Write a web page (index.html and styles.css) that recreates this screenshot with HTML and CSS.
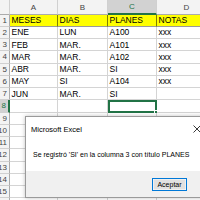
FILE: index.html
```html
<!DOCTYPE html>
<html>
<head>
<meta charset="utf-8">
<link rel="stylesheet" href="styles.css">
</head>
<body>
<div class="sheet">
  <div class="ch corner"></div>
  <div class="ch">A</div>
  <div class="ch">B</div>
  <div class="ch sel">C</div>
  <div class="ch">D</div>

  <div class="rh"><span>1</span></div>
  <div class="c y">MESES</div><div class="c y">DIAS</div><div class="c y">PLANES</div><div class="c y">NOTAS</div>

  <div class="rh"><span>2</span></div>
  <div class="c">ENE</div><div class="c">LUN</div><div class="c">A100</div><div class="c">xxx</div>
  <div class="rh"><span>3</span></div>
  <div class="c">FEB</div><div class="c">MAR.</div><div class="c">A101</div><div class="c">xxx</div>
  <div class="rh"><span>4</span></div>
  <div class="c">MAR</div><div class="c">MAR.</div><div class="c">A102</div><div class="c">xxx</div>
  <div class="rh"><span>5</span></div>
  <div class="c">ABR</div><div class="c">MAR.</div><div class="c">SI</div><div class="c">xxx</div>
  <div class="rh"><span>6</span></div>
  <div class="c">MAY</div><div class="c">SI</div><div class="c">A104</div><div class="c">xxx</div>
  <div class="rh"><span>7</span></div>
  <div class="c">JUN</div><div class="c">MAR.</div><div class="c">SI</div><div class="c"></div>
  <div class="rh rsel"><span>8</span></div>
  <div class="c"></div><div class="c"></div><div class="c active"><i class="handle"></i></div><div class="c"></div>
  <div class="rh"><span>9</span></div>
  <div class="c"></div><div class="c"></div><div class="c"></div><div class="c"></div>
  <div class="rh"><span>10</span></div>
  <div class="c"></div><div class="c"></div><div class="c"></div><div class="c"></div>
  <div class="rh"><span>11</span></div>
  <div class="c"></div><div class="c"></div><div class="c"></div><div class="c"></div>
  <div class="rh"><span>12</span></div>
  <div class="c"></div><div class="c"></div><div class="c"></div><div class="c"></div>
  <div class="rh"><span>13</span></div>
  <div class="c"></div><div class="c"></div><div class="c"></div><div class="c"></div>
  <div class="rh"><span>14</span></div>
  <div class="c"></div><div class="c"></div><div class="c"></div><div class="c"></div>
  <div class="rh"><span>15</span></div>
  <div class="c"></div><div class="c"></div><div class="c"></div><div class="c"></div>
  <div class="rh"><span>16</span></div>
  <div class="c"></div><div class="c"></div><div class="c"></div><div class="c"></div>
</div>

<div class="dialog">
  <div class="dtitle">
    <span>Microsoft Excel</span>
    <svg class="close" width="8" height="8" viewBox="0 0 8 8"><path d="M0.5 0.5 L7.5 7.5 M7.5 0.5 L0.5 7.5" stroke="#222" stroke-width="0.9" fill="none"/></svg>
  </div>
  <div class="dmsg">Se registró 'SI' en la columna 3 con título PLANES</div>
  <div class="dfoot">
    <button class="btn">Aceptar</button>
  </div>
</div>
</body>
</html>
```

FILE: styles.css
```css
html, body {
  margin: 0;
  padding: 0;
  width: 200px;
  height: 200px;
  overflow: hidden;
  background: #ffffff;
}
body {
  position: relative;
  font-family: "Liberation Sans Narrow", "Liberation Sans", Arial, sans-serif;
}
.sheet {
  display: grid;
  grid-template-columns: 10px 48px 50px 49px 60px;
  grid-template-rows: 14.5px repeat(16, 12.25px);
  font-size: 8.5px;
  color: #000;
}
.ch {
  background: #f3f3f3;
  color: #444;
  border-right: 1px solid #d0d0d0;
  border-bottom: 1px solid #ababab;
  display: flex;
  align-items: center;
  justify-content: center;
  font-size: 8px;
  box-sizing: border-box;
  padding-top: 1px;
}
.ch.corner {
  background: #f3f3f3;
}
.ch.sel {
  background: #d2d2d2;
  color: #217346;
  border-bottom: 2px solid #217346;
}
.rh {
  background: #f3f3f3;
  color: #444;
  border-right: 1px solid #ababab;
  border-bottom: 1px solid #d0d0d0;
  box-sizing: border-box;
  display: flex;
  align-items: center;
  justify-content: flex-end;
  overflow: hidden;
  font-size: 8px;
  padding-right: 2px;
}
.rh span {
  flex: none;
}
.rh.rsel {
  background: #d2d2d2;
  color: #217346;
  border-right: 2px solid #217346;
}
.c {
  border-right: 1px solid #d4d4d4;
  border-bottom: 1px solid #d4d4d4;
  box-sizing: border-box;
  padding-left: 1.5px;
  display: flex;
  align-items: center;
  white-space: nowrap;
  overflow: hidden;
  position: relative;
}
.c.y {
  background: #ffff00;
  border-right: 1px solid #7f7f00;
  border-bottom: 1px solid #9a9a9a;
}
.c.active {
  border: 2px solid #217346;
  overflow: visible;
}
.handle {
  position: absolute;
  right: -3px;
  bottom: -3px;
  width: 4px;
  height: 4px;
  background: #217346;
  border: 1px solid #fff;
  box-sizing: border-box;
}
.dialog {
  position: absolute;
  left: 25px;
  top: 116px;
  width: 190px;
  height: 82px;
  background: #ffffff;
  border: 1px solid #9a9a9a;
  box-shadow: 0 0 4px rgba(0,0,0,0.25);
  box-sizing: border-box;
  display: flex;
  flex-direction: column;
  font-family: "Liberation Sans", Arial, sans-serif;
  color: #000;
}
.dtitle {
  height: 20px;
  display: flex;
  align-items: center;
  justify-content: space-between;
  padding-left: 5px;
  padding-right: 13px;
  font-size: 7.5px;
  padding-top: 2px;
}
.close {
  display: block;
}
.dmsg {
  flex: 1;
  display: flex;
  align-items: center;
  padding-left: 7px;
  font-size: 7px;
  padding-bottom: 2px;
}
.dfoot {
  height: 26px;
  background: #f0f0f0;
  display: flex;
  align-items: center;
  padding-left: 126px;
}
.btn {
  width: 35px;
  height: 13px;
  padding: 0;
  margin: 0;
  font-family: "Liberation Sans", Arial, sans-serif;
  font-size: 7px;
  color: #000;
  background: #e1e1e1;
  border: 1.5px solid #0078d7;
  box-shadow: inset 0 0 0 0.5px #fff;
  box-sizing: border-box;
}
```
